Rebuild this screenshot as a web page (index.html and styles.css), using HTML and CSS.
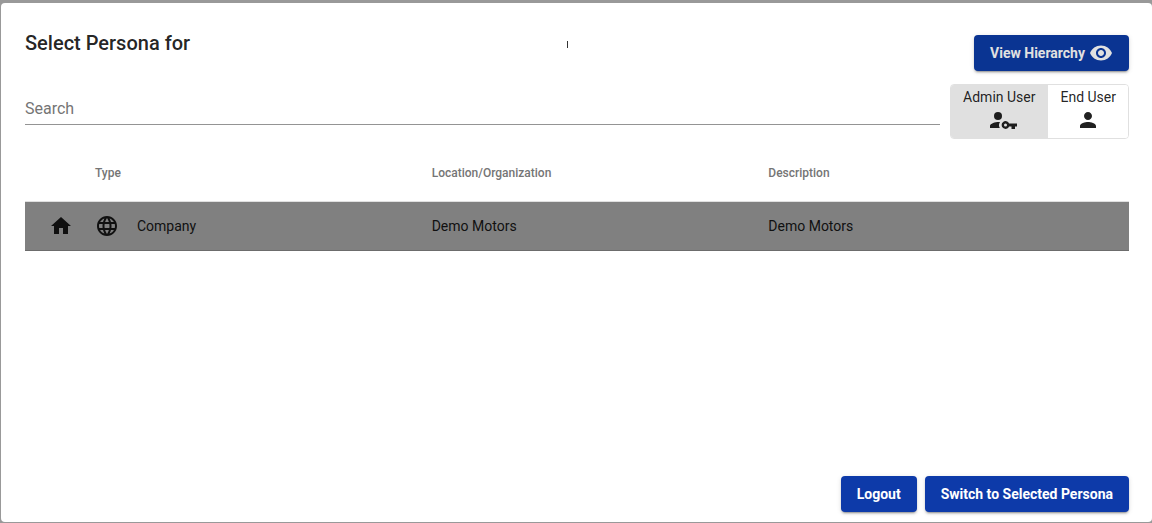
FILE: index.html
```html
<!DOCTYPE html>
<html lang="en">
<head>
<meta charset="utf-8">
<title>Select Persona</title>
<link rel="stylesheet" href="styles.css">
</head>
<body>
<main class="dialog" role="dialog" aria-labelledby="title">
  <header class="header">
    <h1 class="title" id="title">Select Persona for <span class="name-end"></span></h1>
    <button class="btn btn-hierarchy" type="button">View Hierarchy
      <svg class="icon" viewBox="0 0 24 24" aria-hidden="true"><path d="M12 4.5C7 4.5 2.73 7.61 1 12c1.73 4.39 6 7.5 11 7.5s9.270-3.110 11-7.500c-1.730-4.390-6-7.500-11-7.500zM12 17c-2.760 0-5-2.240-5-5s2.240-5 5-5 5 2.240 5 5-2.240 5-5 5zm0-8c-1.660 0-3 1.340-3 3s1.340 3 3 3 3-1.340 3-3-1.340-3-3-3z"/></svg>
    </button>
  </header>
  <div class="filters">
    <input class="search" type="text" placeholder="Search" aria-label="Search">
    <div class="toggle" role="group" aria-label="User type">
      <button class="toggle-item selected" type="button" aria-pressed="true">Admin User
        <svg class="icon icon-key" viewBox="-8 0 36 24" aria-hidden="true"><circle cx="9" cy="8" r="4"/><path d="M10.500 14.050C7.500 13.700 1 15.300 1 18v2h9.800c-1.100-2-1.100-4 .2-5.950z"/><path fill-rule="evenodd" d="M20.100 15.500A3.900 3.900 0 1 0 20.100 18.500H22.500V21H26V18.500H28V15.500zM16.500 18.500a1.500 1.500 0 1 1 0-3 1.500 1.500 0 0 1 0 3z"/></svg>
      </button>
      <button class="toggle-item" type="button" aria-pressed="false">End User
        <svg class="icon" viewBox="0 0 24 24" aria-hidden="true"><path d="M12 12c2.210 0 4-1.790 4-4s-1.790-4-4-4-4 1.790-4 4 1.790 4 4 4zm0 2c-2.670 0-8 1.340-8 4v2h16v-2c0-2.660-5.330-4-8-4z"/></svg>
      </button>
    </div>
  </div>
  <table class="personas">
    <colgroup><col class="col-home"><col><col><col><col class="col-end"></colgroup>
    <thead>
      <tr><th></th><th scope="col">Type</th><th scope="col">Location/Organization</th><th scope="col">Description</th><th></th></tr>
    </thead>
    <tbody>
      <tr>
        <td class="home"><svg class="icon" viewBox="0 0 24 24" aria-hidden="true"><path d="M10 20v-6h4v6h5v-8h3L12 3 2 12h3v8z"/></svg></td>
        <td><span class="type"><svg class="icon" viewBox="0 0 24 24" aria-hidden="true"><path d="M11.990 2C6.470 2 2 6.480 2 12s4.470 10 9.990 10C17.520 22 22 17.520 22 12S17.520 2 11.990 2zm6.930 6h-2.950c-.32-1.250-.78-2.450-1.380-3.560 1.840.63 3.370 1.910 4.330 3.560zM12 4.040c.83 1.200 1.480 2.530 1.910 3.960h-3.820c.43-1.430 1.080-2.760 1.910-3.960zM4.260 14C4.100 13.360 4 12.690 4 12s.1-1.360.26-2h3.380c-.08.66-.14 1.320-.14 2s.06 1.340.14 2H4.260zm.82 2h2.950c.32 1.250.78 2.450 1.380 3.560-1.840-.63-3.370-1.900-4.330-3.560zm2.950-8H5.080c.96-1.660 2.490-2.930 4.330-3.560C8.810 5.550 8.350 6.750 8.030 8zM12 19.960c-.83-1.200-1.480-2.530-1.910-3.960h3.820c-.43 1.430-1.080 2.760-1.910 3.960zM14.340 14H9.660c-.09-.66-.16-1.320-.16-2s.07-1.350.16-2h4.680c.09.65.16 1.320.16 2s-.07 1.340-.16 2zm.25 5.560c.6-1.110 1.060-2.310 1.380-3.560h2.950c-.96 1.650-2.490 2.930-4.330 3.560zM16.360 14c.08-.66.14-1.320.14-2s-.06-1.340-.14-2h3.380c.16.64.26 1.310.26 2s-.1 1.360-.26 2h-3.380z"/></svg>Company</span></td>
        <td>Demo Motors</td>
        <td>Demo Motors</td>
        <td></td>
      </tr>
    </tbody>
  </table>
  <footer class="actions">
    <button class="btn" type="button">Logout</button>
    <button class="btn" type="button">Switch to Selected Persona</button>
  </footer>
</main>
</body>
</html>
```
FILE: styles.css
```css
* { box-sizing: border-box; }

body {
  margin: 0;
  min-height: 100vh;
  display: flex;
  padding: 3px 0 1px 1px;
  background: #999;
  font-family: Roboto, "Liberation Sans", sans-serif;
  font-size: 14px;
  color: rgba(0, 0, 0, 0.87);
}

button, input { font: inherit; color: inherit; }

.dialog {
  flex: 1;
  display: flex;
  flex-direction: column;
  padding: 24px 23px 10px 24px;
  border-radius: 4px;
  background: #fff;
}

.icon { width: 24px; height: 24px; fill: currentColor; flex: none; display: block; }

.header {
  display: flex;
  justify-content: space-between;
  align-items: flex-start;
}

.title {
  display: flex;
  flex: 1;
  align-items: center;
  gap: 377px;
  margin: 0;
  font-size: 20px;
  font-weight: 500;
  line-height: 32px;
}

.name-end { width: 1px; height: 7px; margin-top: 3px; background: #333; }

.btn {
  display: flex;
  align-items: center;
  gap: 4px;
  height: 36px;
  padding: 0 16px;
  border: 0;
  border-radius: 4px;
  background: #0d3aa9;
  color: #fff;
  font-weight: 700;
  box-shadow: 0 3px 1px -2px rgba(0, 0, 0, 0.2), 0 2px 2px rgba(0, 0, 0, 0.14), 0 1px 5px rgba(0, 0, 0, 0.12);
}

.btn-hierarchy {
  margin-top: 8px;
  background: #0a3492;
  color: #e1e1e1;
}

.filters {
  display: flex;
  align-items: flex-start;
  gap: 10px;
  margin-top: 13px;
}

.search {
  flex: 1;
  min-width: 0;
  height: 33px;
  margin-top: 8px;
  padding: 0;
  border: 0;
  border-bottom: 1px solid #949494;
  background: none;
  font-size: 16px;
  outline: 0;
}

.search::placeholder { color: #757575; opacity: 1; }

.toggle {
  display: flex;
  border: 1px solid #e0e0e0;
  border-radius: 4px;
  overflow: hidden;
}

.toggle-item {
  display: flex;
  flex-direction: column;
  align-items: center;
  padding: 1px 12px 6px;
  border: 0;
  background: #fff;
  line-height: 22px;
}

.toggle-item + .toggle-item { border-left: 1px solid #e0e0e0; }

.toggle-item.selected { background: #e0e0e0; }

.icon-key { width: 36px; }

.personas {
  width: 100%;
  margin-top: 6px;
  table-layout: fixed;
  border-collapse: collapse;
}

.col-home { width: 70px; }
.col-end { width: 24px; }

.personas th {
  height: 56px;
  padding: 0;
  border-bottom: 1px solid #e0e0e0;
  color: #757575;
  font-size: 12px;
  font-weight: 500;
  text-align: left;
}

.personas td {
  height: 49px;
  padding: 0;
  border-bottom: 1px solid #6c6c6c;
  background: #808080;
  color: #101010;
}

.personas .home { padding-left: 24px; }

.type { display: flex; align-items: center; gap: 18px; }

.actions {
  display: flex;
  justify-content: flex-end;
  gap: 8px;
  margin-top: auto;
}
```
